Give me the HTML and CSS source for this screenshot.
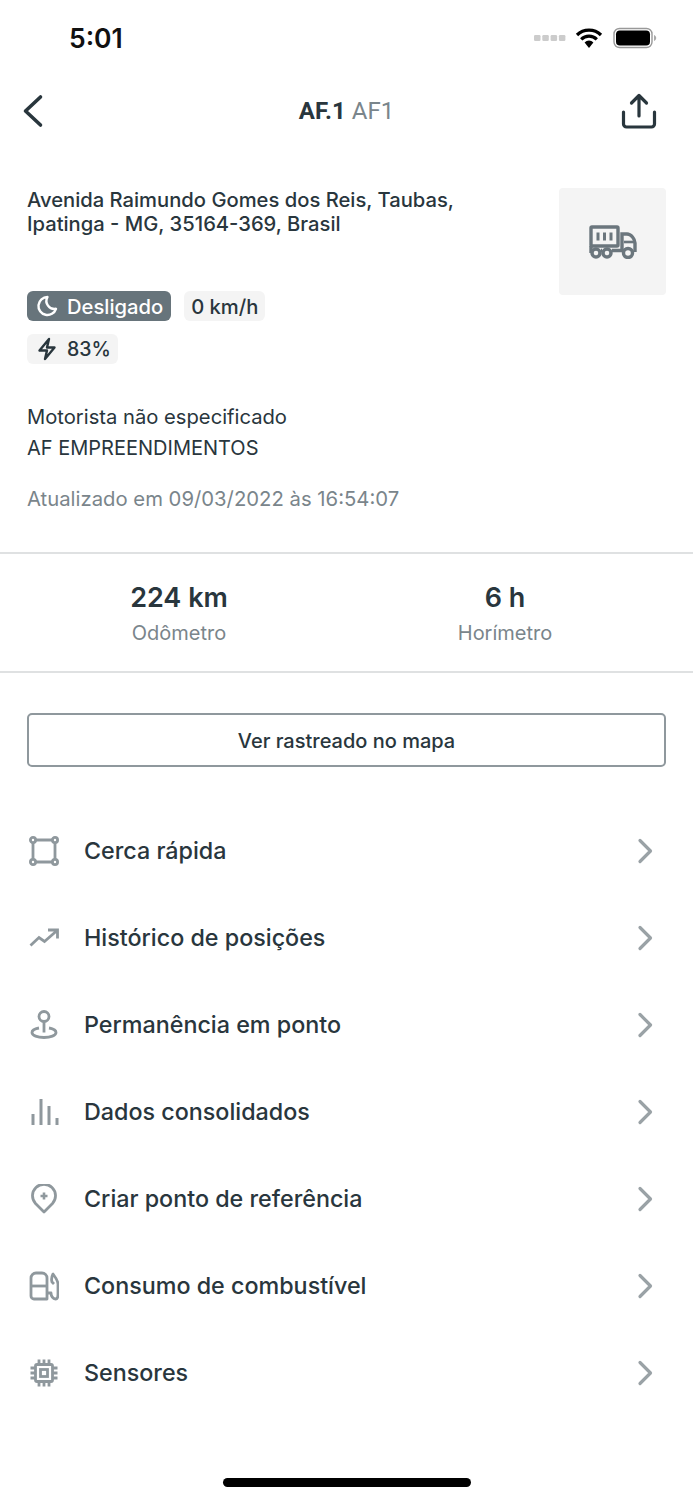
FILE: index.html

```html
<!DOCTYPE html>
<html>
<head>
  <meta charset="UTF-8">
  <title>AF.1 AF1</title>
  <link rel="stylesheet" href="styles.css">
</head>
<body>

<div class="status">
  <span class="time">5:01</span>
  <div class="status-icons">
    <svg class="signal" width="32" height="8" viewBox="0 0 32 8"><g fill="#ccc"><rect x="0" y="1" width="6.500" height="6" rx="1.200"/><rect x="8.300" y="1" width="6.500" height="6" rx="1.200"/><rect x="16.600" y="1" width="6.500" height="6" rx="1.200"/><rect x="24.900" y="1" width="6.500" height="6" rx="1.200"/></g></svg>
    <svg width="28" height="22" viewBox="0 0 28 22"><path d="M2 8a17 17 0 0 1 24 0M6.200 12.300a11 11 0 0 1 15.600 0" fill="none" stroke="#000" stroke-width="3.200"/><path d="M9.600 15.400a6.200 6.200 0 0 1 8.800 0L14 21z" fill="#000"/></svg>
    <svg width="44" height="22" viewBox="0 0 44 22"><rect x="1" y="1.500" width="38" height="19" rx="5.500" fill="none" stroke="#999" stroke-width="1.400"/><rect x="3" y="3.500" width="34" height="15" rx="3.800" fill="#000"/><path d="M41 8v6c1.400-.5 2.200-1.700 2.200-3s-.8-2.500-2.200-3z" fill="#aaa"/></svg>
  </div>
</div>

<div class="nav">
  <svg class="nav-back" width="24" height="34" viewBox="0 0 24 34"><path d="M19.500 3 4.500 17l15 14" fill="none" stroke="#29363d" stroke-width="3.600" stroke-linecap="round" stroke-linejoin="round"/></svg>
  <div class="nav-title"><b>AF.1</b> AF1</div>
  <svg width="36" height="36" viewBox="0 0 36 36"><path d="M18 23V3M10.500 10 18 2.500 25.500 10M2.500 19v12a3 3 0 0 0 3 3h25a3 3 0 0 0 3-3V19" fill="none" stroke="#29363d" stroke-width="3.200" stroke-linecap="round" stroke-linejoin="round"/></svg>
</div>

<div class="info">
  <div class="info-top">
    <div class="address">Avenida Raimundo Gomes dos Reis, Taubas,<br>Ipatinga - MG, 35164-369, Brasil</div>
    <div class="thumb">
      <svg width="48" height="34" viewBox="0 0 48 34" fill="none" stroke="#6b767d" stroke-width="3.400"><rect x="2" y="2" width="27" height="19" rx="1"/><path d="M9 7.500v8M15.500 7.500v8M22 7.500v8" stroke-width="3"/><path d="M2 21v7M12 25.500h1M23 25.500h10M33 26V9h5c4 0 8 5 8 9v9"/><path d="M35 17h10" stroke-width="2.600"/><circle cx="7" cy="28" r="4"/><circle cx="18" cy="28" r="4"/><circle cx="39" cy="28" r="4.500"/></svg>
    </div>
  </div>
  <div class="badges">
    <span class="badge badge-off">
      <svg width="24" height="24" viewBox="0 0 24 24"><path d="M12.500 3a9 9 0 1 0 8.500 11.800A8 8 0 0 1 12.500 3z" fill="none" stroke="#fff" stroke-width="2.400" stroke-linejoin="round"/></svg>
      Desligado
    </span>
    <span class="badge badge-speed">0 km/h</span>
  </div>
  <div class="badges">
    <span class="badge badge-num">
      <svg width="24" height="24" viewBox="0 0 24 24"><path d="M14 2 4.500 13.500H12L10 22l9.500-11.500H12z" fill="none" stroke="#29363d" stroke-width="2.400" stroke-linejoin="round"/></svg>
      83%
    </span>
  </div>
  <p class="line driver">Motorista não especificado</p>
  <p class="line company">AF EMPREENDIMENTOS</p>
  <p class="line updated">Atualizado em 09/03/2022 às 16:54:07</p>
</div>

<div class="stats">
  <div class="stat"><div class="stat-value">224 km</div><div class="stat-label">Odômetro</div></div>
  <div class="stat"><div class="stat-value">6 h</div><div class="stat-label">Horímetro</div></div>
</div>

<div class="map-wrap"><button class="map-btn">Ver rastreado no mapa</button></div>

<div class="menu">
  <div class="row">
    <svg class="row-icon" width="30" height="30" viewBox="0 0 30 30"><g fill="none" stroke="#8f989d" stroke-width="2.800"><path d="M6 4h18M6 26h18M4 6v18M26 6v18"/><circle cx="4" cy="4" r="2.600"/><circle cx="26" cy="4" r="2.600"/><circle cx="4" cy="26" r="2.600"/><circle cx="26" cy="26" r="2.600"/></g></svg>
    <span>Cerca rápida</span>
    <svg class="chevron" width="16" height="26" viewBox="0 0 16 26"><path d="m3 2.500 10.500 10.500L3 23.500" fill="none" stroke="#9aa2a6" stroke-width="3.200" stroke-linecap="round" stroke-linejoin="round"/></svg>
  </div>
  <div class="row">
    <svg class="row-icon" width="30" height="30" viewBox="0 0 30 30"><path d="m1.500 22.500 8.500-8 5.500 4 12-10.500M19 7h9.500v8.500" fill="none" stroke="#8f989d" stroke-width="2.800"/></svg>
    <span>Histórico de posições</span>
    <svg class="chevron" width="16" height="26" viewBox="0 0 16 26"><path d="m3 2.500 10.500 10.500L3 23.500" fill="none" stroke="#9aa2a6" stroke-width="3.200" stroke-linecap="round" stroke-linejoin="round"/></svg>
  </div>
  <div class="row">
    <svg class="row-icon" width="30" height="30" viewBox="0 0 30 30"><g fill="none" stroke="#8f989d" stroke-width="2.800"><circle cx="15" cy="6.500" r="5"/><path d="M15 11.500v11"/><path d="M10 18c-4 .7-7 2.200-7 4.500C3 25.500 8.500 27.500 15 27.500s12-2 12-5c0-2.300-3-3.800-7-4.500"/></g></svg>
    <span>Permanência em ponto</span>
    <svg class="chevron" width="16" height="26" viewBox="0 0 16 26"><path d="m3 2.500 10.500 10.500L3 23.500" fill="none" stroke="#9aa2a6" stroke-width="3.200" stroke-linecap="round" stroke-linejoin="round"/></svg>
  </div>
  <div class="row">
    <svg class="row-icon" width="30" height="30" viewBox="0 0 30 30"><path d="M4 17v11M12 2v26M20 9v19M28 21v7" fill="none" stroke="#8f989d" stroke-width="3"/></svg>
    <span>Dados consolidados</span>
    <svg class="chevron" width="16" height="26" viewBox="0 0 16 26"><path d="m3 2.500 10.500 10.500L3 23.500" fill="none" stroke="#9aa2a6" stroke-width="3.200" stroke-linecap="round" stroke-linejoin="round"/></svg>
  </div>
  <div class="row">
    <svg class="row-icon" width="30" height="30" viewBox="0 0 30 30"><path d="M15 28 6.500 19.500a11.500 11.500 0 1 1 17 0z" fill="none" stroke="#8f989d" stroke-width="2.800" stroke-linejoin="round"/><path d="M15 8.500v7M11.500 12h7" stroke="#8f989d" stroke-width="2.600"/></svg>
    <span>Criar ponto de referência</span>
    <svg class="chevron" width="16" height="26" viewBox="0 0 16 26"><path d="m3 2.500 10.500 10.500L3 23.500" fill="none" stroke="#9aa2a6" stroke-width="3.200" stroke-linecap="round" stroke-linejoin="round"/></svg>
  </div>
  <div class="row">
    <svg class="row-icon" width="30" height="30" viewBox="0 0 30 30"><g fill="none" stroke="#8f989d" stroke-width="2.800" stroke-linejoin="round"><path d="M2 7a5 5 0 0 1 5-5h6a5 5 0 0 1 5 5v21H5a3 3 0 0 1-3-3z"/><path d="M2 15h16"/><path d="M18 22h4c0 3 2 6 4.500 6s2.500-3 2.500-5V13c0-3-2-6-5-10-1 2-2 5-1 8l2 2"/></g></svg>
    <span>Consumo de combustível</span>
    <svg class="chevron" width="16" height="26" viewBox="0 0 16 26"><path d="m3 2.500 10.500 10.500L3 23.500" fill="none" stroke="#9aa2a6" stroke-width="3.200" stroke-linecap="round" stroke-linejoin="round"/></svg>
  </div>
  <div class="row">
    <svg class="row-icon" width="30" height="30" viewBox="0 0 30 30"><g fill="none" stroke="#8f989d" stroke-width="2.800"><rect x="6.500" y="6.500" width="17" height="17" rx="1.500"/><rect x="11.500" y="11.500" width="7" height="7"/><path d="M10 1.500v5M15 1.500v5M20 1.500v5M10 23.500v5M15 23.500v5M20 23.500v5M1.500 10h5M1.500 15h5M1.500 20h5M23.500 10h5M23.500 15h5M23.500 20h5"/></g></svg>
    <span>Sensores</span>
    <svg class="chevron" width="16" height="26" viewBox="0 0 16 26"><path d="m3 2.500 10.500 10.500L3 23.500" fill="none" stroke="#9aa2a6" stroke-width="3.200" stroke-linecap="round" stroke-linejoin="round"/></svg>
  </div>
</div>

<div class="home-bar"></div>

</body>
</html>
```

FILE: styles.css

```css
* { box-sizing: border-box; }
html, body { height: 1500px; overflow: hidden; }
body {
  margin: 0;
  background: #fff;
  color: #29363d;
  font-family: Inter, "Liberation Sans", sans-serif;
}

.status {
  height: 76px;
  padding: 0 36px 0 69px;
  display: flex;
  align-items: center;
  justify-content: space-between;
}
.time { font-size: 26.5px; font-weight: 600; color: #111; }
.status-icons { display: flex; align-items: center; gap: 10px; }
.signal { margin-right: -1px; }

.nav {
  height: 70px;
  padding: 0 36px;
  display: grid;
  grid-template-columns: 36px 1fr 36px;
  align-items: center;
}
.nav-back { margin-left: -15px; }
.nav-title { font-family: Roboto, sans-serif; font-size: 24px; color: #7a858b; text-align: center; }
.nav-title b { color: #29363d; }

.info { padding: 42px 27px 0; }
.info-top { display: flex; justify-content: space-between; height: 103px; }
.address { font-size: 20.2px; font-weight: 550; line-height: 24px; }
.thumb {
  width: 107px;
  height: 107px;
  background: #f4f4f4;
  border-radius: 4px;
  display: flex;
  align-items: center;
  justify-content: center;
  flex: none;
}
.badges { display: flex; gap: 13px; margin-bottom: 13px; }
.badge {
  height: 30px;
  padding: 0 8px;
  display: inline-flex;
  align-items: center;
  gap: 8px;
  background: #f4f4f4;
  border-radius: 6px;
  font-size: 20.2px;
  font-weight: 500;
}
.badge-off { background: #67747b; color: #fff; }
.badge-speed { padding: 0 7px; }
.badge-num { font-size: 19.5px; padding-right: 7px; }
.line { margin: 0; font-size: 20.2px; line-height: 31px; }
.driver { margin-top: 37px; }
.company { font-size: 20px; margin-top: 1px; }
.updated { margin-top: 19px; font-size: 20.3px; color: #7a858b; }

.stats {
  margin-top: 38px;
  height: 121px;
  border-top: 2px solid #dfe1e2;
  border-bottom: 2px solid #dfe1e2;
  display: flex;
  padding: 0 25px 0 16px;
}
.stat { flex: 1; text-align: center; padding-top: 26px; }
.stat-value { font-size: 27px; font-weight: 600; line-height: 36px; }
.stat-label { font-size: 20px; color: #7a858b; line-height: 34px; }

.map-wrap { padding: 40px 27px 0; }
.map-btn {
  width: 100%;
  height: 54px;
  padding-top: 2px;
  background: #fff;
  border: 2px solid #8f989d;
  border-radius: 5px;
  color: #29363d;
  font-family: inherit;
  font-size: 20px;
  font-weight: 500;
}

.menu { padding: 40px 27px 0 29px; }
.row {
  height: 87px;
  display: flex;
  align-items: center;
  font-size: 23.3px;
  font-weight: 450;
}
.row-icon { flex: none; margin-right: 25px; }
.chevron { margin-left: auto; margin-right: 13px; }

.home-bar {
  position: absolute;
  left: 223px;
  top: 1478px;
  width: 248px;
  height: 9px;
  background: #000;
  border-radius: 5px;
}
```
